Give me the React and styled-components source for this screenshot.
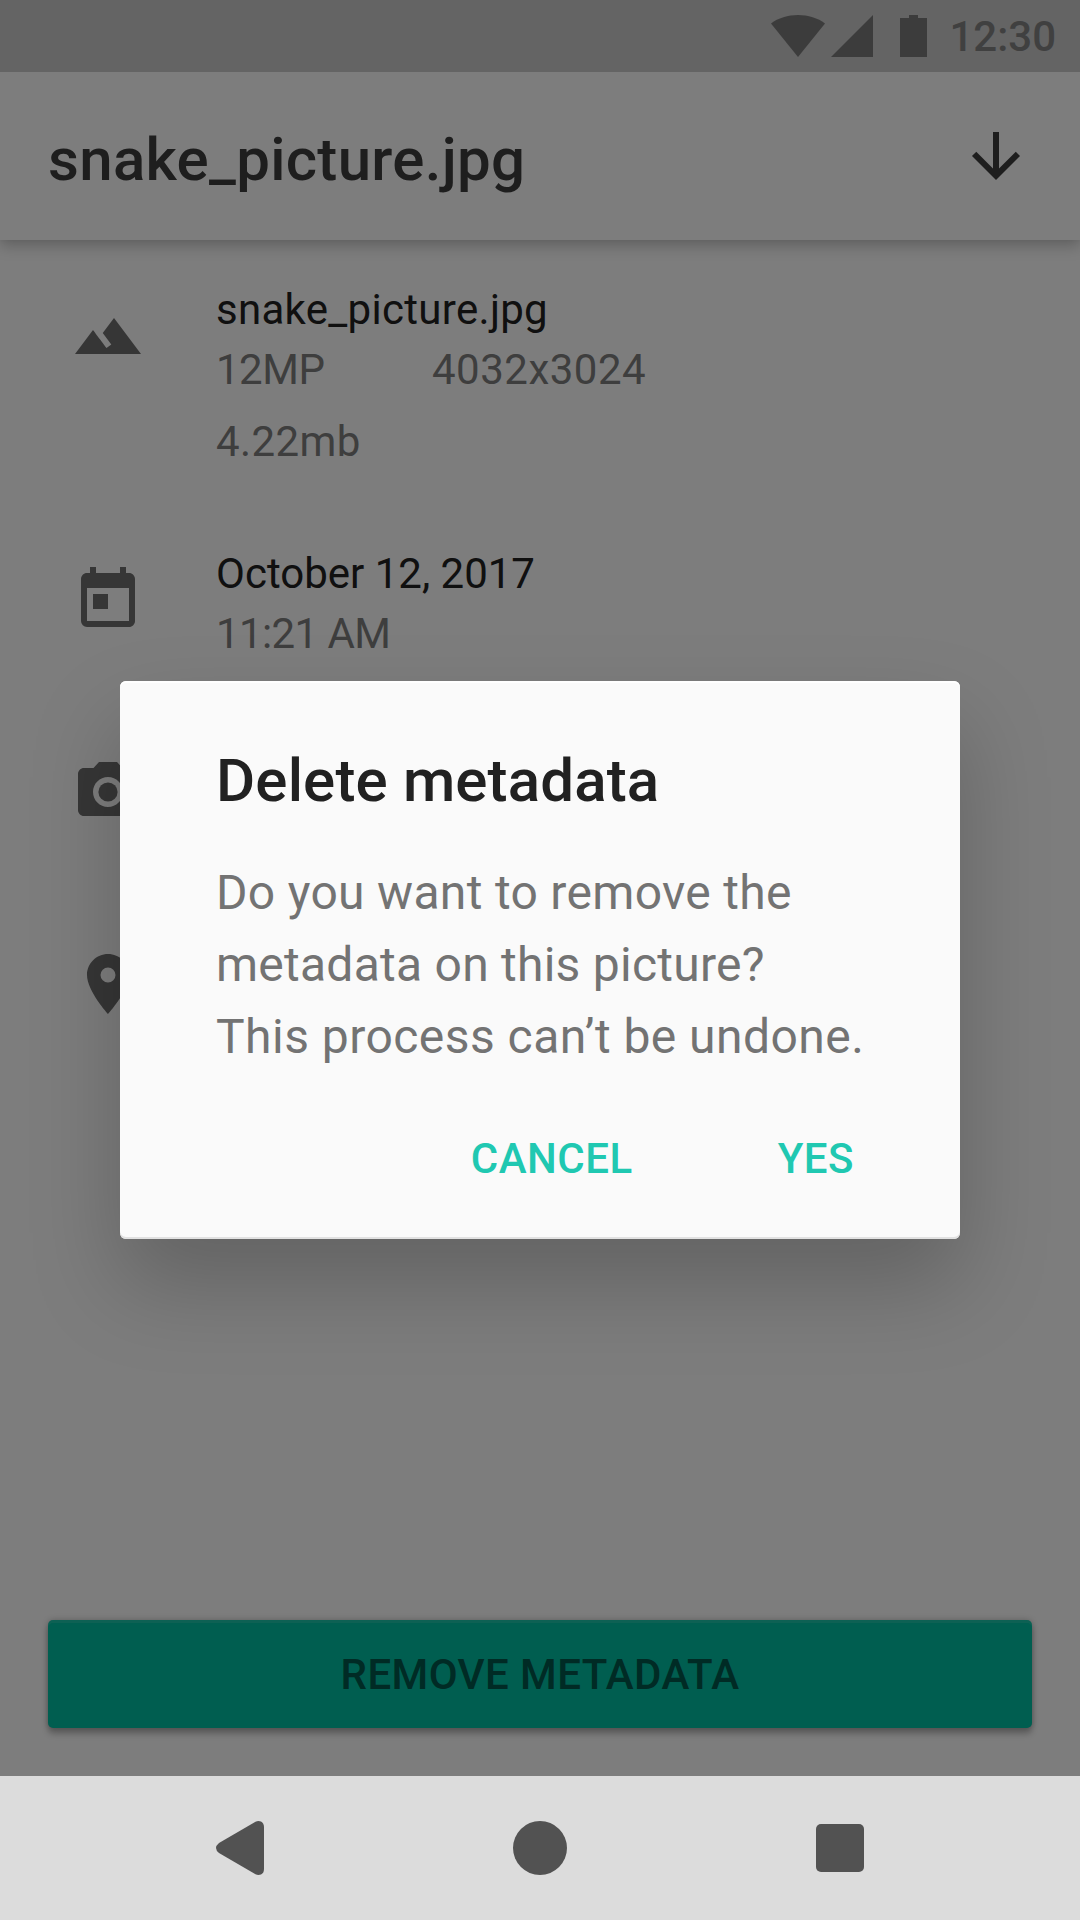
import React from "react";
import styled, { createGlobalStyle } from "styled-components";
import {
  MdArrowDownward,
  MdLandscape,
  MdToday,
  MdCameraAlt,
  MdPlace,
} from "react-icons/md";

const GlobalStyle = createGlobalStyle`
  *, *::before, *::after { box-sizing: border-box; }
  html, body { margin: 0; padding: 0; }
  body { background: #dcdcdc; font-family: Roboto, "Liberation Sans", sans-serif; }
  button { font: inherit; border: 0; margin: 0; cursor: pointer; }
`;

const Screen = styled.div`
  position: relative;
  width: 1080px;
  height: 1920px;
  display: flex;
  flex-direction: column;
  overflow: hidden;
  background: #fafafa;
`;

const StatusBar = styled.header`
  height: 72px;
  flex: none;
  display: flex;
  justify-content: flex-end;
  align-items: center;
  padding-right: 24px;
  background: #c8c8c8;
  color: #797979;
  z-index: 2;
`;

const StatusIcons = styled.svg`
  display: block;
  fill: currentColor;
  margin-right: 22px;
`;

const Clock = styled.time`
  padding-top: 2px;
  color: #808080;
  font-size: 42px;
  font-weight: 500;
  line-height: 72px;
`;

const AppBar = styled.div`
  height: 168px;
  flex: none;
  display: flex;
  justify-content: space-between;
  align-items: center;
  padding: 0 48px;
  background: #fafafa;
  color: #3d3d3d;
  box-shadow: 0 6px 14px rgba(0, 0, 0, 0.22), 0 0 6px rgba(0, 0, 0, 0.06);
  z-index: 1;
`;

const AppTitle = styled.h1`
  margin: 0;
  padding-top: 7px;
  font-size: 60px;
  font-weight: 500;
  line-height: 72px;
  letter-spacing: 0.3px;
`;

const IconButton = styled.button`
  display: flex;
  padding: 0;
  background: none;
  color: inherit;
`;

const Details = styled.ul`
  flex: 1;
  list-style: none;
  margin: 0;
  padding: 40px 72px 0;
  display: flex;
  flex-direction: column;
  gap: 72px;
`;

const DetailRow = styled.li`
  display: flex;
  gap: 72px;
  min-height: 120px;
`;

const DetailIcon = styled.span`
  display: flex;
  height: 72px;
  margin-top: 20px;
  color: #6c6c6c;
`;

const DetailText = styled.div`
  display: flex;
  flex-direction: column;
  font-size: 42px;
  line-height: 60px;
`;

const Primary = styled.span`
  color: #202020;
  letter-spacing: ${(p) => p.$tracking || 0}px;
`;

const Secondary = styled.div`
  display: grid;
  grid-template-columns: 216px auto;
  row-gap: 12px;
  color: #7c7c7c;
`;

const Value = styled.span`
  letter-spacing: ${(p) => p.$tracking || 0}px;
`;

const Footer = styled.footer`
  flex: none;
  padding: 0 48px 48px;
`;

const RemoveButton = styled.button`
  display: block;
  width: 100%;
  height: 108px;
  padding: 1px 0 0;
  border-radius: 5px;
  background: #00bca0;
  color: #00564a;
  font-size: 42px;
  font-weight: 500;
  line-height: 107px;
  letter-spacing: 0.4px;
  text-align: center;
  box-shadow: inset 0 3px 0 rgba(255, 255, 255, 0.1), 0 6px 6px rgba(0, 0, 0, 0.24),
    0 0 6px rgba(0, 0, 0, 0.24);
`;

const NavBar = styled.nav`
  height: 144px;
  flex: none;
  display: flex;
  justify-content: center;
  align-items: center;
  gap: 228px;
  background: #dcdcdc;
  z-index: 4;
`;

const NavIcon = styled.svg`
  display: block;
  width: 72px;
  height: 72px;
  fill: #525252;
`;

const Scrim = styled.div`
  position: absolute;
  inset: 0;
  z-index: 3;
  display: flex;
  justify-content: center;
  align-items: center;
  background: rgba(0, 0, 0, 0.5);
`;

const Dialog = styled.section`
  width: 840px;
  height: 558px;
  padding: 64px 96px 0;
  display: flex;
  flex-direction: column;
  border-radius: 6px;
  background: #fafafa;
  box-shadow: inset 0 2px 0 #ffffff, inset 0 -2px 0 #e1e1e1,
    0 45px 90px rgba(0, 0, 0, 0.21);
`;

const DialogTitle = styled.h2`
  margin: 0;
  color: #212121;
  font-size: 60px;
  font-weight: 500;
  line-height: 72px;
  letter-spacing: 0.16px;
`;

const DialogText = styled.p`
  margin: 40px 0 0;
  color: #737373;
  font-size: 48px;
  line-height: 72px;
  white-space: nowrap;
`;

const Line = styled.span`
  display: block;
  letter-spacing: ${(p) => p.$tracking || 0}px;
`;

const Actions = styled.div`
  display: flex;
  justify-content: flex-end;
  gap: 145px;
  margin-top: 62px;
  padding-right: 10px;
`;

const TextButton = styled.button`
  padding: 0;
  background: none;
  color: #20c8b1;
  font-size: 42px;
  font-weight: 500;
  line-height: 48px;
  letter-spacing: 0.5px;
`;

export default function App() {
  return (
    <>
      <GlobalStyle />
      <Screen>
        <StatusBar>
          <StatusIcons width="160" height="72" viewBox="0 0 160 72">
            <path d="M4 23.5C11 18 21 15 31 15s20 3 27 8.500L31 57z" />
            <path d="M106 15v42H64z" />
            <path d="M133 18h9v-3h9v3h9v39h-27z" />
          </StatusIcons>
          <Clock>12:30</Clock>
        </StatusBar>
        <AppBar>
          <AppTitle>snake_picture.jpg</AppTitle>
          <IconButton aria-label="Download">
            <MdArrowDownward size={72} />
          </IconButton>
        </AppBar>
        <Details>
          <DetailRow>
            <DetailIcon><MdLandscape size={72} /></DetailIcon>
            <DetailText>
              <Primary $tracking={0.3}>snake_picture.jpg</Primary>
              <Secondary>
                <Value $tracking={-0.5}>12MP</Value>
                <Value $tracking={0.5}>4032x3024</Value>
                <Value $tracking={0.4}>4.22mb</Value>
              </Secondary>
            </DetailText>
          </DetailRow>
          <DetailRow>
            <DetailIcon><MdToday size={72} /></DetailIcon>
            <DetailText>
              <Primary>October 12, 2017</Primary>
              <Secondary>
                <Value $tracking={-0.6}>11:21 AM</Value>
              </Secondary>
            </DetailText>
          </DetailRow>
          <DetailRow>
            <DetailIcon><MdCameraAlt size={72} /></DetailIcon>
          </DetailRow>
          <DetailRow>
            <DetailIcon><MdPlace size={72} /></DetailIcon>
          </DetailRow>
        </Details>
        <Footer>
          <RemoveButton>REMOVE METADATA</RemoveButton>
        </Footer>
        <NavBar>
          <NavIcon viewBox="0 0 72 72">
            <path d="M51.500 9.800Q54 8.500 57 9.500Q60 11 60 15V57Q60 61 57 62.500Q54 63.500 51.500 62.200L15 41Q9 36 15 31z" />
          </NavIcon>
          <NavIcon viewBox="0 0 72 72">
            <circle cx="36" cy="36" r="27" />
          </NavIcon>
          <NavIcon viewBox="0 0 72 72">
            <rect x="12" y="12" width="48" height="48" rx="5" />
          </NavIcon>
        </NavBar>
        <Scrim>
          <Dialog role="dialog" aria-label="Delete metadata">
            <DialogTitle>Delete metadata</DialogTitle>
            <DialogText>
              <Line $tracking={0.31}>Do you want to remove the</Line>
              <Line $tracking={0.25}>metadata on this picture?</Line>
              <Line $tracking={0.46}>This process can’t be undone.</Line>
            </DialogText>
            <Actions>
              <TextButton>CANCEL</TextButton>
              <TextButton>YES</TextButton>
            </Actions>
          </Dialog>
        </Scrim>
      </Screen>
    </>
  );
}
